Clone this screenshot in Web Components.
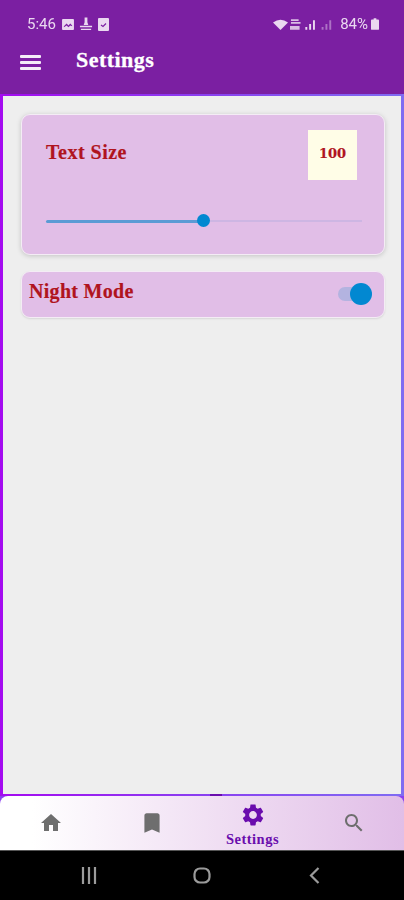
<!DOCTYPE html>
<html>
<head>
<meta charset="utf-8">
<title>Settings</title>
<style>
  html, body { margin: 0; height: 100%; }
  body { width: 404px; height: 900px; overflow: hidden; display: flex; flex-direction: column; background: #000; font-family: "Liberation Serif", serif; }
</style>
</head>
<body>
<app-header title="Settings"></app-header>
<settings-page>
  <text-size-card value="100" percent="50"></text-size-card>
  <night-mode-card></night-mode-card>
</settings-page>
<bottom-nav>
  <nav-item icon="home"></nav-item>
  <nav-item icon="bookmark"></nav-item>
  <nav-item icon="settings" label="Settings" active></nav-item>
  <nav-item icon="search"></nav-item>
</bottom-nav>
<system-nav></system-nav>

<script>
const ICONS = {
  home: 'M10 20v-6h4v6h5v-8h3L12 3 2 12h3v8z',
  bookmark: 'M17 3H7c-1.1 0-2 .9-2 2v16l7-3 7 3V5c0-1.1-.9-2-2-2z',
  settings: 'M19.14 12.94c.04-.3.06-.61.06-.94 0-.32-.02-.64-.07-.94l2.03-1.58c.18-.14.23-.41.12-.61l-1.92-3.32c-.12-.22-.37-.29-.59-.22l-2.39.96c-.5-.38-1.03-.7-1.62-.94l-.36-2.54c-.04-.24-.24-.41-.48-.41h-3.84c-.24 0-.43.17-.47.41l-.36 2.54c-.59.24-1.13.57-1.62.94l-2.39-.96c-.22-.08-.47 0-.59.22L2.74 8.87c-.12.21-.08.47.12.61l2.03 1.58c-.05.3-.09.63-.09.94s.02.64.07.94l-2.03 1.58c-.18.14-.23.41-.12.61l1.92 3.32c.12.22.37.29.59.22l2.39-.96c.5.38 1.03.7 1.62.94l.36 2.54c.05.24.24.41.48.41h3.84c.24 0 .44-.17.47-.41l.36-2.54c.59-.24 1.13-.56 1.62-.94l2.39.96c.22.08.47 0 .59-.22l1.92-3.32c.12-.22.07-.47-.12-.61l-2.01-1.58zM12 15.6c-1.98 0-3.6-1.62-3.6-3.6s1.62-3.6 3.6-3.6 3.6 1.62 3.6 3.6-1.62 3.6-3.6 3.6z',
  search: 'M15.5 14h-.79l-.28-.27C15.41 12.59 16 11.11 16 9.5 16 5.91 13.09 3 9.5 3S3 5.91 3 9.5 5.91 16 9.5 16c1.61 0 3.09-.59 4.23-1.57l.27.28v.79l5 4.99L20.49 19l-4.99-5zm-6 0C7.01 14 5 11.99 5 9.5S7.01 5 9.5 5 14 7.01 14 9.5 11.99 14 9.5 14z'
};

class AppHeader extends HTMLElement {
  connectedCallback() {
    this.attachShadow({ mode: 'open' }).innerHTML = `
      <style>
        :host { display: block; height: 94px; flex: none; background: #7b1fa2; color: #fff; box-sizing: border-box; }
        .status { height: 48px; padding: 0 25px 0 27px; display: flex; align-items: center; justify-content: space-between; box-sizing: border-box; color: #ead8f0; font: 15px Roboto, sans-serif; filter: blur(.4px); }
        .group { display: flex; align-items: center; }
        .left svg { margin-left: 6px; }
        .right svg { display: block; }
        .pct { margin: 0 3px 0 4px; }
        .bar { height: 46px; display: flex; align-items: center; padding-left: 20px; margin-top: -12px; }
        .burger { width: 21px; height: 15px; margin-top: 7px; display: flex; flex-direction: column; justify-content: space-between; }
        .burger i { display: block; height: 3px; background: #f5ecf8; border-radius: 1px; }
        h1 { margin: 0 0 0 35px; font: bold 22px "Liberation Serif", serif; letter-spacing: .45px; -webkit-text-stroke: .3px #fff; position: relative; top: 1px; }
      </style>
      <div class="status">
        <div class="group left">
          <span>5:46</span>
          <svg width="12" height="11" viewBox="0 0 13 12"><path fill="#ead8f0" d="M1 0h11a1 1 0 0 1 1 1v10a1 1 0 0 1-1 1H1a1 1 0 0 1-1-1V1a1 1 0 0 1 1-1z"/><path fill="#7b1fa2" d="M2 8l3-3 2 2 2-2 2 2v1l-2-1-2 2-2-2-3 2z"/></svg>
          <svg width="14" height="14" viewBox="0 0 15 14" style="margin-left:5px"><path fill="#ead8f0" d="M6 0h3v5l1 3H5l1-3zM1 9h13v1.500H1zM2 12h11v1.500H2z"/></svg>
          <svg width="11" height="13" viewBox="0 0 11 13" style="margin-left:5px"><path fill="#ead8f0" d="M1 0h9a1 1 0 0 1 1 1v11a1 1 0 0 1-1 1H1a1 1 0 0 1-1-1V1a1 1 0 0 1 1-1z"/><path fill="none" stroke="#7b1fa2" stroke-width="1.200" d="M3 7l2 1.500 3-3"/></svg>
        </div>
        <div class="group right">
          <svg width="15" height="11" viewBox="0 0 15 11"><path fill="#ead8f0" d="M0 3.500Q7.500-2 15 3.500l-7.500 7.500z"/></svg>
          <svg width="46" height="13" viewBox="0 0 48 13" style="margin-left:2px"><g fill="#ead8f0"><path d="M1 1h8v1.800H1zM1 4h10v1.800H1zM0 8h10v4H0z" opacity=".85"/><path d="M16 9h2v3h-2zM20 6h2v6h-2zM24 2h2v10h-2z"/><path opacity=".45" d="M33 9h2v3h-2zM37 6h2v6h-2zM41 2h2v10h-2z"/></g></svg>
          <span class="pct">84%</span>
          <svg width="8" height="12" viewBox="0 0 9 13"><path fill="#ead8f0" d="M3 0h3v1.500h2a1 1 0 0 1 1 1V12a1 1 0 0 1-1 1H1a1 1 0 0 1-1-1V2.500a1 1 0 0 1 1-1h2z"/></svg>
        </div>
      </div>
      <div class="bar">
        <div class="burger"><i></i><i></i><i></i></div>
        <h1>${this.getAttribute('title')}</h1>
      </div>`;
  }
}

class SettingsPage extends HTMLElement {
  connectedCallback() {
    this.attachShadow({ mode: 'open' }).innerHTML = `
      <style>
        :host { display: block; flex: 1; min-height: 0; padding: 2px 3px 2px; background: linear-gradient(#6a0dad, #6a0dad) 210px 100% / 12px 2px no-repeat, linear-gradient(90deg, #a40af0, #8a3ff0 50%, #7f6cf2); }
        .inner { height: 100%; box-sizing: border-box; background: #eeeeee; padding: 18px 16px 0 18px; display: flex; flex-direction: column; gap: 16px; }
      </style>
      <div class="inner"><slot></slot></div>`;
  }
}

const cardCss = `
  background: #e1bee7;
  border: 1px solid #f4ecf5;
  border-radius: 9px;
  box-sizing: border-box;
  color: #b0141e;
  font: bold 20px "Liberation Serif", serif;
  letter-spacing: .5px;
  -webkit-text-stroke: .2px #b0141e;
`;

class TextSizeCard extends HTMLElement {
  connectedCallback() {
    const percent = this.getAttribute('percent');
    this.attachShadow({ mode: 'open' }).innerHTML = `
      <style>
        :host { display: block; height: 141px; ${cardCss} box-shadow: 0 1px 5px rgba(0,0,0,.18); padding: 15px 22px 0 24px; }
        .top { display: flex; justify-content: space-between; align-items: flex-start; padding-right: 5px; }
        .label { margin-top: 10px; line-height: 24px; }
        .value { width: 49px; height: 50px; box-sizing: border-box; padding-bottom: 4px; background: #fffde7; display: flex; align-items: center; justify-content: center; font: bold 13px "DejaVu Serif", serif; letter-spacing: 0; }
        .slider { margin-top: 34px; height: 14px; position: relative; width: 316px; display: flex; align-items: center; }
        .on { width: ${percent}%; height: 3px; background: #5b9bd5; border-radius: 2px 0 0 2px; }
        .off { flex: 1; height: 2px; background: #cdb6e3; }
        .thumb { position: absolute; left: calc(${percent}% - 7px); top: 0; width: 13px; height: 13px; border-radius: 50%; background: #0288d1; }
      </style>
      <div class="top"><span class="label">Text Size</span><span class="value">${this.getAttribute('value')}</span></div>
      <div class="slider"><div class="on"></div><div class="off"></div><div class="thumb"></div></div>`;
  }
}

class NightModeCard extends HTMLElement {
  connectedCallback() {
    this.attachShadow({ mode: 'open' }).innerHTML = `
      <style>
        :host { display: flex; height: 47px; ${cardCss} align-items: center; justify-content: space-between; padding: 0 12px 0 7px; box-shadow: 0 1px 2px rgba(0,0,0,.1); }
        span { margin-top: -7px; letter-spacing: .3px; }
        .switch { position: relative; width: 34px; height: 22px; margin-top: -2px; }
        .track { position: absolute; left: 0; right: 6px; top: 4px; height: 14px; border-radius: 7px; background: #b3b3e0; }
        .thumb { position: absolute; right: 0; top: 0; width: 22px; height: 22px; border-radius: 50%; background: #0288d1; }
      </style>
      <span>Night Mode</span>
      <div class="switch"><div class="track"></div><div class="thumb"></div></div>`;
  }
}

class BottomNav extends HTMLElement {
  connectedCallback() {
    this.attachShadow({ mode: 'open' }).innerHTML = `
      <style>
        :host { display: block; flex: none; height: 55px; background: #8a3ff0; }
        .nav { height: 55px; box-sizing: border-box; border-radius: 8px 8px 0 0; background: linear-gradient(90deg, #fff 8%, #e1bee7 100%); display: grid; grid-template-columns: repeat(4, 1fr); border-bottom: 1px solid #555; }
      </style>
      <div class="nav"><slot></slot></div>`;
  }
}

class NavItem extends HTMLElement {
  connectedCallback() {
    const active = this.hasAttribute('active');
    const label = this.getAttribute('label');
    const icon = this.getAttribute('icon');
    const size = active ? 26 : icon === 'bookmark' ? 26 : 24;
    this.attachShadow({ mode: 'open' }).innerHTML = `
      <style>
        :host { display: flex; flex-direction: column; align-items: center; justify-content: ${active ? 'flex-start' : 'center'}; color: ${active ? '#6a0dad' : '#6e6e6e'}; }
        svg { display: block; width: ${size}px; height: ${size}px; fill: currentColor; margin-top: ${active ? 6 : 0}px; }
        span { font: bold 14.5px "Liberation Serif", serif; letter-spacing: .5px; line-height: 16px; margin-top: 3px; }
      </style>
      <svg viewBox="0 0 24 24"><path d="${ICONS[icon]}"/></svg>
      ${label ? `<span>${label}</span>` : ''}`;
  }
}

class SystemNav extends HTMLElement {
  connectedCallback() {
    this.attachShadow({ mode: 'open' }).innerHTML = `
      <style>
        :host { display: grid; grid-template-columns: repeat(3, 113px); padding-left: 32px; flex: none; height: 49px; background: #000; align-items: center; justify-items: center; }
        svg { display: block; }
      </style>
      <svg width="16" height="17" viewBox="0 0 16 17" fill="none" stroke="#9b9b9b" stroke-width="2.200"><path d="M2 0v17M8 0v17M14 0v17"/></svg>
      <svg width="18" height="17" viewBox="0 0 18 17" fill="none" stroke="#9b9b9b" stroke-width="2.200"><rect x="1.500" y="1.500" width="15" height="14" rx="5.500"/></svg>
      <svg width="11" height="17" viewBox="0 0 11 17" fill="none" stroke="#9b9b9b" stroke-width="2.200"><path d="M9.500 1L2 8.500l7.500 7.500"/></svg>`;
  }
}

customElements.define('app-header', AppHeader);
customElements.define('settings-page', SettingsPage);
customElements.define('text-size-card', TextSizeCard);
customElements.define('night-mode-card', NightModeCard);
customElements.define('bottom-nav', BottomNav);
customElements.define('nav-item', NavItem);
customElements.define('system-nav', SystemNav);
</script>
</body>
</html>
